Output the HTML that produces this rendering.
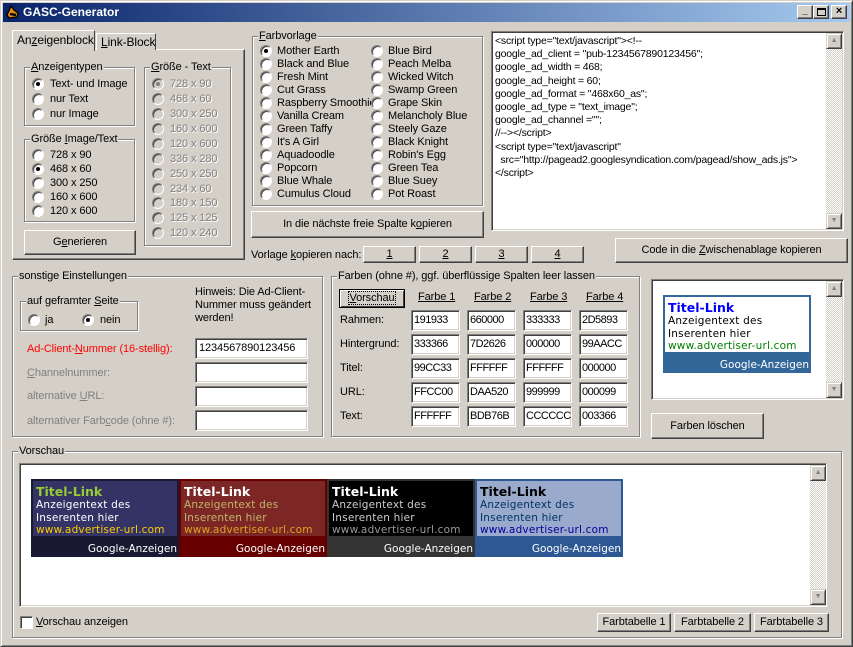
<!DOCTYPE html>
<html><head><meta charset="utf-8">
<style>
*{box-sizing:border-box;margin:0;padding:0}
body{width:853px;height:647px;overflow:hidden;background:#d4d0c8;font-family:"Liberation Sans",Arial,sans-serif;font-size:11px;letter-spacing:-0.1px;color:#000;position:relative}
.a{position:absolute;white-space:nowrap;line-height:14px}
.gb{position:absolute;border:1px solid #808080;box-shadow:1px 1px 0 #fff,inset 1px 1px 0 #fff}
.gl{position:absolute;background:#d4d0c8;padding:0 1px;line-height:13px;white-space:nowrap}
.btn{position:absolute;background:#d4d0c8;border:1px solid;border-color:#fff #404040 #404040 #fff;box-shadow:inset -1px -1px 0 #808080;text-align:center;white-space:nowrap}
.ed{position:absolute;background:#fff;border:1px solid;border-color:#808080 #fff #fff #808080;box-shadow:inset 1px 1px 0 #404040,inset -1px -1px 0 #d4d0c8;padding:2px 0 0 3px;line-height:14px;white-space:nowrap;overflow:hidden}
.sm{letter-spacing:-0.5px;padding-left:2px}
.r{position:absolute;width:12px;height:12px;border-radius:50%;background:#fff;border:1px solid;border-color:#808080 #fff #fff #808080;box-shadow:inset 1px 1px 0 #404040}
.r.c::after{content:"";position:absolute;left:3px;top:3px;width:4px;height:4px;border-radius:50%;background:#000}
.r.d{background:#d4d0c8}
.r.d.c::after{background:#808080}
.dis{color:#808080;text-shadow:1px 1px 0 #fff}
u{text-decoration:underline}
.sb{position:absolute;background:repeating-conic-gradient(#fff 0 25%,#d4d0c8 0 50%) 0 0/2px 2px}
.sbb{position:absolute;left:0;width:16px;height:16px;background:#d4d0c8;border:1px solid;border-color:#d4d0c8 #404040 #404040 #d4d0c8;box-shadow:inset 1px 1px 0 #fff,inset -1px -1px 0 #808080;font-size:7px;color:#808080;text-align:center;line-height:14px}
.ad{position:absolute;top:479px;width:148px;height:78px;font-family:"DejaVu Sans","Liberation Sans",sans-serif;letter-spacing:0}
.ad .in{position:absolute;left:2px;top:2px;right:2px;height:55px;padding:3px 0 0 3px}
.ad .t{font-weight:bold;font-size:12.5px;line-height:15px}
.ad .x{font-size:10.5px;line-height:12.5px;letter-spacing:0.2px}
.ad .g{position:absolute;right:2px;bottom:2px;font-size:10.5px;color:#fff}
</style></head><body>
<div style="position:absolute;left:0;top:0;width:853px;height:647px;border:1px solid;border-color:#d4d0c8 #404040 #404040 #d4d0c8;box-shadow:inset 1px 1px 0 #fff,inset -1px -1px 0 #808080"></div>
<div style="position:absolute;left:3px;top:3px;width:847px;height:19px;background:linear-gradient(to right,#0a246a,#a6caf0)"></div>
<div style="position:absolute;left:5px;top:4px;width:14px;height:16px"><svg width="14" height="16"><path d="M6 2 L2 11 L4 14 L12 13 L13 9 L9 6Z" fill="#e08a10" stroke="#000" stroke-width="1.3"/><path d="M5 10 L11 11" stroke="#000" stroke-width="2.2"/></svg></div>
<div class="a" style="left:23px;top:5px;color:#fff;font-weight:bold;font-size:12px;letter-spacing:0">GASC-Generator</div>
<div class="btn" style="left:797px;top:5px;width:16px;height:14px;font-size:10px;line-height:10px;font-weight:bold">_</div>
<div class="btn" style="left:813px;top:5px;width:16px;height:14px"><div style="position:absolute;left:3px;top:2px;width:9px;height:8px;border:1px solid #000;border-top-width:2px"></div></div>
<div class="btn" style="left:831px;top:5px;width:16px;height:14px;font-weight:bold;font-size:11px;line-height:11px">×</div>

<div style="position:absolute;left:12px;top:49px;width:233px;height:211px;border:1px solid;border-color:#fff #404040 #404040 #fff;box-shadow:inset -1px -1px 0 #808080"></div>
<div style="position:absolute;left:96px;top:33px;width:60px;height:17px;border:1px solid;border-bottom:none;border-color:#fff #404040 #404040 #fff;background:#d4d0c8"></div>
<div class="a" style="left:101px;top:35px;font-size:12px"><u>L</u>ink-Block</div>
<div style="position:absolute;left:12px;top:30px;width:83px;height:21px;border:1px solid;border-bottom:none;border-color:#fff #404040 #404040 #fff;background:#d4d0c8"></div>
<div class="a" style="left:17px;top:33px;font-size:12px">An<u>z</u>eigenblock</div>

<div class="gb" style="left:24px;top:67px;width:111px;height:59px"></div>
<div class="gl" style="left:30px;top:61px"><u>A</u>nzeigentypen</div>
<div class="r c" style="left:32px;top:78px"></div><div class="a" style="left:50px;top:77px">Text- und Image</div>
<div class="r" style="left:32px;top:93px"></div><div class="a" style="left:50px;top:92px">nur Text</div>
<div class="r" style="left:32px;top:108px"></div><div class="a" style="left:50px;top:107px">nur Image</div>

<div class="gb" style="left:24px;top:139px;width:111px;height:83px"></div>
<div class="gl" style="left:30px;top:133px">Größe <u>I</u>mage/Text</div>
<div class="r" style="left:32px;top:149px"></div><div class="a" style="left:50px;top:148px">728 x 90</div>
<div class="r c" style="left:32px;top:163px"></div><div class="a" style="left:50px;top:162px">468 x 60</div>
<div class="r" style="left:32px;top:177px"></div><div class="a" style="left:50px;top:176px">300 x 250</div>
<div class="r" style="left:32px;top:191px"></div><div class="a" style="left:50px;top:190px">160 x 600</div>
<div class="r" style="left:32px;top:205px"></div><div class="a" style="left:50px;top:204px">120 x 600</div>
<div class="btn" style="left:24px;top:230px;width:112px;height:25px;line-height:22px">G<u>e</u>nerieren</div>

<div class="gb" style="left:144px;top:67px;width:87px;height:179px"></div>
<div class="gl" style="left:150px;top:61px"><u>G</u>röße - Text</div>
<div class="r d c" style="left:152px;top:78px"></div><div class="a dis" style="left:170px;top:77px">728 x 90</div>
<div class="r d" style="left:152px;top:93px"></div><div class="a dis" style="left:170px;top:92px">468 x 60</div>
<div class="r d" style="left:152px;top:108px"></div><div class="a dis" style="left:170px;top:107px">300 x 250</div>
<div class="r d" style="left:152px;top:123px"></div><div class="a dis" style="left:170px;top:122px">160 x 600</div>
<div class="r d" style="left:152px;top:138px"></div><div class="a dis" style="left:170px;top:137px">120 x 600</div>
<div class="r d" style="left:152px;top:153px"></div><div class="a dis" style="left:170px;top:152px">336 x 280</div>
<div class="r d" style="left:152px;top:168px"></div><div class="a dis" style="left:170px;top:167px">250 x 250</div>
<div class="r d" style="left:152px;top:183px"></div><div class="a dis" style="left:170px;top:182px">234 x 60</div>
<div class="r d" style="left:152px;top:197px"></div><div class="a dis" style="left:170px;top:196px">180 x 150</div>
<div class="r d" style="left:152px;top:212px"></div><div class="a dis" style="left:170px;top:211px">125 x 125</div>
<div class="r d" style="left:152px;top:227px"></div><div class="a dis" style="left:170px;top:226px">120 x 240</div>

<div class="gb" style="left:252px;top:36px;width:231px;height:170px"></div>
<div class="gl" style="left:258px;top:30px"><u>F</u>arbvorlage</div>
<div class="r c" style="left:260px;top:45px"></div><div class="a" style="left:277px;top:44px">Mother Earth</div>
<div class="r" style="left:260px;top:58px"></div><div class="a" style="left:277px;top:57px">Black and Blue</div>
<div class="r" style="left:260px;top:71px"></div><div class="a" style="left:277px;top:70px">Fresh Mint</div>
<div class="r" style="left:260px;top:84px"></div><div class="a" style="left:277px;top:83px">Cut Grass</div>
<div class="r" style="left:260px;top:97px"></div><div class="a" style="left:277px;top:96px;width:94px;overflow:hidden">Raspberry Smoothie</div>
<div class="r" style="left:260px;top:110px"></div><div class="a" style="left:277px;top:109px">Vanilla Cream</div>
<div class="r" style="left:260px;top:123px"></div><div class="a" style="left:277px;top:122px">Green Taffy</div>
<div class="r" style="left:260px;top:136px"></div><div class="a" style="left:277px;top:135px">It's A Girl</div>
<div class="r" style="left:260px;top:149px"></div><div class="a" style="left:277px;top:148px">Aquadoodle</div>
<div class="r" style="left:260px;top:162px"></div><div class="a" style="left:277px;top:161px">Popcorn</div>
<div class="r" style="left:260px;top:175px"></div><div class="a" style="left:277px;top:174px">Blue Whale</div>
<div class="r" style="left:260px;top:188px"></div><div class="a" style="left:277px;top:187px">Cumulus Cloud</div>
<div class="r" style="left:371px;top:45px"></div><div class="a" style="left:388px;top:44px">Blue Bird</div>
<div class="r" style="left:371px;top:58px"></div><div class="a" style="left:388px;top:57px">Peach Melba</div>
<div class="r" style="left:371px;top:71px"></div><div class="a" style="left:388px;top:70px">Wicked Witch</div>
<div class="r" style="left:371px;top:84px"></div><div class="a" style="left:388px;top:83px">Swamp Green</div>
<div class="r" style="left:371px;top:97px"></div><div class="a" style="left:388px;top:96px">Grape Skin</div>
<div class="r" style="left:371px;top:110px"></div><div class="a" style="left:388px;top:109px">Melancholy Blue</div>
<div class="r" style="left:371px;top:123px"></div><div class="a" style="left:388px;top:122px">Steely Gaze</div>
<div class="r" style="left:371px;top:136px"></div><div class="a" style="left:388px;top:135px">Black Knight</div>
<div class="r" style="left:371px;top:149px"></div><div class="a" style="left:388px;top:148px">Robin's Egg</div>
<div class="r" style="left:371px;top:162px"></div><div class="a" style="left:388px;top:161px">Green Tea</div>
<div class="r" style="left:371px;top:175px"></div><div class="a" style="left:388px;top:174px">Blue Suey</div>
<div class="r" style="left:371px;top:188px"></div><div class="a" style="left:388px;top:187px">Pot Roast</div>
<div class="btn" style="left:251px;top:211px;width:233px;height:27px;line-height:25px">In die nächste freie Spalte k<u>o</u>pieren</div>
<div class="a" style="left:251px;top:248px">Vorlage <u>k</u>opieren nach:</div>
<div class="btn" style="left:363px;top:246px;width:53px;height:17px;line-height:14px"><u>1</u></div>
<div class="btn" style="left:419px;top:246px;width:53px;height:17px;line-height:14px"><u>2</u></div>
<div class="btn" style="left:475px;top:246px;width:53px;height:17px;line-height:14px"><u>3</u></div>
<div class="btn" style="left:531px;top:246px;width:53px;height:17px;line-height:14px"><u>4</u></div>

<div class="ed" style="left:491px;top:31px;width:353px;height:200px;padding:3px 0 0 3px;font-size:10.5px;letter-spacing:-0.2px;line-height:13.2px;white-space:pre">&lt;script type="text/javascript"&gt;&lt;!--
google_ad_client = "pub-1234567890123456";
google_ad_width = 468;
google_ad_height = 60;
google_ad_format = "468x60_as";
google_ad_type = "text_image";
google_ad_channel ="";
//--&gt;&lt;/script&gt;
&lt;script type="text/javascript"
  src="http://pagead2.googlesyndication.com/pagead/show_ads.js"&gt;
&lt;/script&gt;</div>
<div class="sb" style="left:826px;top:33px;width:16px;height:196px"><div class="sbb" style="top:0">▲</div><div class="sbb" style="bottom:0">▼</div></div>
<div class="btn" style="left:615px;top:238px;width:233px;height:25px;line-height:23px">Code in die <u>Z</u>wischenablage kopieren</div>

<div class="gb" style="left:12px;top:276px;width:311px;height:161px"></div>
<div class="gl" style="left:18px;top:270px">sonstige Einstellungen</div>
<div class="gb" style="left:20px;top:301px;width:118px;height:30px"></div>
<div class="gl" style="left:26px;top:295px">auf geframter <u>S</u>eite</div>
<div class="r" style="left:28px;top:314px"></div><div class="a" style="left:45px;top:313px">ja</div>
<div class="r c" style="left:82px;top:314px"></div><div class="a" style="left:100px;top:313px">nein</div>
<div class="a" style="left:195px;top:286px;line-height:13px">Hinweis: Die Ad-Client-<br>Nummer muss geändert<br>werden!</div>
<div class="a" style="left:27px;top:342px;color:#f00">Ad-Client-<u>N</u>ummer (16-stellig):</div>
<div class="a dis" style="left:27px;top:366px;text-shadow:none"><u>C</u>hannelnummer:</div>
<div class="a dis" style="left:27px;top:389px;text-shadow:none">alternative <u>U</u>RL:</div>
<div class="a dis" style="left:27px;top:414px;text-shadow:none">alternativer Farb<u>c</u>ode (ohne #):</div>
<div class="ed" style="left:195px;top:338px;width:113px;height:21px">1234567890123456</div>
<div class="ed" style="left:195px;top:362px;width:113px;height:21px"></div>
<div class="ed" style="left:195px;top:386px;width:113px;height:21px"></div>
<div class="ed" style="left:195px;top:410px;width:113px;height:21px"></div>

<div class="gb" style="left:331px;top:276px;width:309px;height:161px"></div>
<div class="gl" style="left:337px;top:270px">Farben (ohne #), ggf. überflüssige Spalten leer lassen</div>
<div class="btn" style="left:339px;top:289px;width:66px;height:19px;line-height:16px;border-color:#000;box-shadow:inset 1px 1px 0 #fff,inset -1px -1px 0 #404040"><span style="outline:1px dotted #000"><u>V</u>orschau</span></div>
<div class="a" style="left:418px;top:290px"><u>Farbe 1</u></div>
<div class="a" style="left:474px;top:290px"><u>Farbe 2</u></div>
<div class="a" style="left:530px;top:290px"><u>Farbe 3</u></div>
<div class="a" style="left:586px;top:290px"><u>Farbe 4</u></div>
<div class="a" style="left:340px;top:313px">Rahmen:</div>
<div class="a" style="left:340px;top:337px">Hintergrund:</div>
<div class="a" style="left:340px;top:361px">Titel:</div>
<div class="a" style="left:340px;top:385px">URL:</div>
<div class="a" style="left:340px;top:409px">Text:</div>
<div class="ed sm" style="left:411px;top:310px;width:49px;height:21px">191933</div>
<div class="ed sm" style="left:467px;top:310px;width:49px;height:21px">660000</div>
<div class="ed sm" style="left:523px;top:310px;width:49px;height:21px">333333</div>
<div class="ed sm" style="left:579px;top:310px;width:49px;height:21px">2D5893</div>
<div class="ed sm" style="left:411px;top:334px;width:49px;height:21px">333366</div>
<div class="ed sm" style="left:467px;top:334px;width:49px;height:21px">7D2626</div>
<div class="ed sm" style="left:523px;top:334px;width:49px;height:21px">000000</div>
<div class="ed sm" style="left:579px;top:334px;width:49px;height:21px">99AACC</div>
<div class="ed sm" style="left:411px;top:358px;width:49px;height:21px">99CC33</div>
<div class="ed sm" style="left:467px;top:358px;width:49px;height:21px">FFFFFF</div>
<div class="ed sm" style="left:523px;top:358px;width:49px;height:21px">FFFFFF</div>
<div class="ed sm" style="left:579px;top:358px;width:49px;height:21px">000000</div>
<div class="ed sm" style="left:411px;top:382px;width:49px;height:21px">FFCC00</div>
<div class="ed sm" style="left:467px;top:382px;width:49px;height:21px">DAA520</div>
<div class="ed sm" style="left:523px;top:382px;width:49px;height:21px">999999</div>
<div class="ed sm" style="left:579px;top:382px;width:49px;height:21px">000099</div>
<div class="ed sm" style="left:411px;top:406px;width:49px;height:21px">FFFFFF</div>
<div class="ed sm" style="left:467px;top:406px;width:49px;height:21px">BDB76B</div>
<div class="ed sm" style="left:523px;top:406px;width:49px;height:21px">CCCCCC</div>
<div class="ed sm" style="left:579px;top:406px;width:49px;height:21px">003366</div>

<div class="ed" style="left:651px;top:279px;width:193px;height:121px"></div>
<div class="sb" style="left:826px;top:281px;width:16px;height:117px"><div class="sbb" style="top:0">▲</div><div class="sbb" style="bottom:0">▼</div></div>
<div class="ad" style="left:663px;top:295px;width:148px;background:#336699">
 <div class="in" style="background:#fff"><div class="t" style="color:#0000ff">Titel-Link</div><div class="x" style="color:#000">Anzeigentext des<br>Inserenten hier</div><div class="x" style="color:#008000">www.advertiser-url.com</div></div>
 <div class="g">Google-Anzeigen</div></div>
<div class="btn" style="left:651px;top:413px;width:113px;height:26px;line-height:24px">Farben löschen</div>

<div class="gb" style="left:12px;top:451px;width:830px;height:187px"></div>
<div class="gl" style="left:18px;top:445px">Vorschau</div>
<div class="ed" style="left:19px;top:463px;width:808px;height:144px"></div>
<div class="sb" style="left:810px;top:465px;width:16px;height:140px"><div class="sbb" style="top:0">▲</div><div class="sbb" style="bottom:0">▼</div></div>
<div class="ad" style="left:31px;background:#191933"><div class="in" style="background:#333366"><div class="t" style="color:#99cc33">Titel-Link</div><div class="x" style="color:#fff">Anzeigentext des<br>Inserenten hier</div><div class="x" style="color:#ffcc00">www.advertiser-url.com</div></div><div class="g">Google-Anzeigen</div></div>
<div class="ad" style="left:179px;background:#660000"><div class="in" style="background:#7d2626"><div class="t" style="color:#fff">Titel-Link</div><div class="x" style="color:#bdb76b">Anzeigentext des<br>Inserenten hier</div><div class="x" style="color:#daa520">www.advertiser-url.com</div></div><div class="g">Google-Anzeigen</div></div>
<div class="ad" style="left:327px;background:#333333"><div class="in" style="background:#000"><div class="t" style="color:#fff">Titel-Link</div><div class="x" style="color:#ccc">Anzeigentext des<br>Inserenten hier</div><div class="x" style="color:#999">www.advertiser-url.com</div></div><div class="g">Google-Anzeigen</div></div>
<div class="ad" style="left:475px;background:#2d5893"><div class="in" style="background:#99aacc"><div class="t" style="color:#000">Titel-Link</div><div class="x" style="color:#003366">Anzeigentext des<br>Inserenten hier</div><div class="x" style="color:#000099">www.advertiser-url.com</div></div><div class="g">Google-Anzeigen</div></div>
<div style="position:absolute;left:20px;top:616px;width:13px;height:13px;background:#fff;border:1px solid;border-color:#808080 #fff #fff #808080;box-shadow:inset 1px 1px 0 #404040"></div>
<div class="a" style="left:36px;top:615px"><u>V</u>orschau anzeigen</div>
<div class="btn" style="left:597px;top:613px;width:74px;height:19px;line-height:16px">Farbtabelle 1</div>
<div class="btn" style="left:674px;top:613px;width:77px;height:19px;line-height:16px">Farbtabelle 2</div>
<div class="btn" style="left:754px;top:613px;width:75px;height:19px;line-height:16px">Farbtabelle 3</div>
</body></html>
